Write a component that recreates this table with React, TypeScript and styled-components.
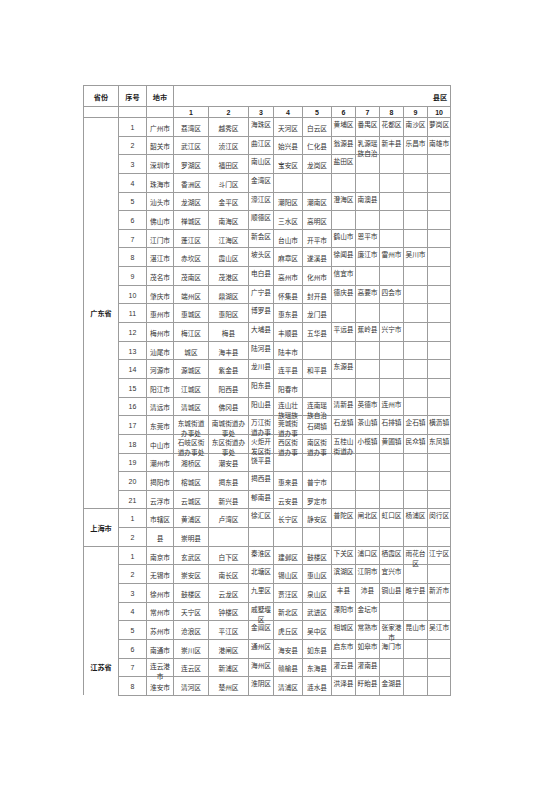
import React from 'react';
import styled, { createGlobalStyle } from 'styled-components';

const Global = createGlobalStyle`
  html, body { margin: 0; padding: 0; background: #ffffff; }
  body {
    font-family: "Noto Sans CJK SC", "Liberation Sans", sans-serif;
    color: #333333;
  }
`;

const ROW = 18.65;
const FONT = 6.7;
const COLS = [35, 28, 27, 35, 40, 25, 29, 29, 24, 24, 24, 24, 23];
// columns (0-based within the 10 county columns) whose text hangs from the top
const TOP_COLS = new Set([2, 5, 6, 7, 8, 9]);

type Row = { seq: string; city: string; items: string[] };
type Province = { name: string; rows: Row[]; tail?: boolean };

const DATA: Province[] = [
  {
    name: '广东省',
    rows: [
      { seq: '1', city: '广州市', items: ['荔湾区', '越秀区', '海珠区', '天河区', '白云区', '黄埔区', '番禺区', '花都区', '南沙区', '萝岗区'] },
      { seq: '2', city: '韶关市', items: ['武江区', '浈江区', '曲江区', '始兴县', '仁化县', '翁源县', '乳源瑶族自治', '新丰县', '乐昌市', '南雄市'] },
      { seq: '3', city: '深圳市', items: ['罗湖区', '福田区', '南山区', '宝安区', '龙岗区', '盐田区'] },
      { seq: '4', city: '珠海市', items: ['香洲区', '斗门区', '金湾区'] },
      { seq: '5', city: '汕头市', items: ['龙湖区', '金平区', '濠江区', '潮阳区', '潮南区', '澄海区', '南澳县'] },
      { seq: '6', city: '佛山市', items: ['禅城区', '南海区', '顺德区', '三水区', '高明区'] },
      { seq: '7', city: '江门市', items: ['蓬江区', '江海区', '新会区', '台山市', '开平市', '鹤山市', '恩平市'] },
      { seq: '8', city: '湛江市', items: ['赤坎区', '霞山区', '坡头区', '麻章区', '遂溪县', '徐闻县', '廉江市', '雷州市', '吴川市'] },
      { seq: '9', city: '茂名市', items: ['茂南区', '茂港区', '电白县', '高州市', '化州市', '信宜市'] },
      { seq: '10', city: '肇庆市', items: ['端州区', '鼎湖区', '广宁县', '怀集县', '封开县', '德庆县', '高要市', '四会市'] },
      { seq: '11', city: '惠州市', items: ['惠城区', '惠阳区', '博罗县', '惠东县', '龙门县'] },
      { seq: '12', city: '梅州市', items: ['梅江区', '梅县', '大埔县', '丰顺县', '五华县', '平远县', '蕉岭县', '兴宁市'] },
      { seq: '13', city: '汕尾市', items: ['城区', '海丰县', '陆河县', '陆丰市'] },
      { seq: '14', city: '河源市', items: ['源城区', '紫金县', '龙川县', '连平县', '和平县', '东源县'] },
      { seq: '15', city: '阳江市', items: ['江城区', '阳西县', '阳东县', '阳春市'] },
      { seq: '16', city: '清远市', items: ['清城区', '佛冈县', '阳山县', '连山壮族瑶族', '连南瑶族自治', '清新县', '英德市', '连州市'] },
      { seq: '17', city: '东莞市', items: ['东城街道办事处', '南城街道办事处', '万江街道办事', '莞城街道办事', '石碣镇', '石龙镇', '茶山镇', '石排镇', '企石镇', '横沥镇'] },
      { seq: '18', city: '中山市', items: ['石岐区街道办事处', '东区街道办事处', '火炬开发区街', '西区街道办事', '南区街道办事', '五桂山街道办', '小榄镇', '黄圃镇', '民众镇', '东凤镇'] },
      { seq: '19', city: '潮州市', items: ['湘桥区', '潮安县', '饶平县'] },
      { seq: '20', city: '揭阳市', items: ['榕城区', '揭东县', '揭西县', '惠来县', '普宁市'] },
      { seq: '21', city: '云浮市', items: ['云城区', '新兴县', '郁南县', '云安县', '罗定市'] },
    ],
  },
  {
    name: '上海市',
    rows: [
      { seq: '1', city: '市辖区', items: ['黄浦区', '卢湾区', '徐汇区', '长宁区', '静安区', '普陀区', '闸北区', '虹口区', '杨浦区', '闵行区'] },
      { seq: '2', city: '县', items: ['崇明县'] },
    ],
  },
  {
    name: '江苏省',
    tail: true,
    rows: [
      { seq: '1', city: '南京市', items: ['玄武区', '白下区', '秦淮区', '建邺区', '鼓楼区', '下关区', '浦口区', '栖霞区', '雨花台区', '江宁区'] },
      { seq: '2', city: '无锡市', items: ['崇安区', '南长区', '北塘区', '锡山区', '惠山区', '滨湖区', '江阴市', '宜兴市'] },
      { seq: '3', city: '徐州市', items: ['鼓楼区', '云龙区', '九里区', '贾汪区', '泉山区', '丰县', '沛县', '铜山县', '睢宁县', '新沂市'] },
      { seq: '4', city: '常州市', items: ['天宁区', '钟楼区', '戚墅堰区', '新北区', '武进区', '溧阳市', '金坛市'] },
      { seq: '5', city: '苏州市', items: ['沧浪区', '平江区', '金阊区', '虎丘区', '吴中区', '相城区', '常熟市', '张家港市', '昆山市', '吴江市'] },
      { seq: '6', city: '南通市', items: ['崇川区', '港闸区', '通州区', '海安县', '如东县', '启东市', '如皋市', '海门市'] },
      { seq: '7', city: '连云港市', items: ['连云区', '新浦区', '海州区', '赣榆县', '东海县', '灌云县', '灌南县'] },
      { seq: '8', city: '淮安市', items: ['清河区', '楚州区', '淮阴区', '清浦区', '涟水县', '洪泽县', '盱眙县', '金湖县'] },
    ],
  },
];

const Page = styled.div`
  width: 560px;
  height: 792px;
  box-sizing: border-box;
  padding: 85px 0 0 83px;
  overflow: hidden;
`;

const Table = styled.table`
  border-collapse: collapse;
  table-layout: fixed;
  width: 367px;
`;

const Cell = styled.td<{ $noBottom?: boolean }>`
  border: 1px solid #9c9c9c;
  ${(p) => (p.$noBottom ? 'border-bottom: none;' : '')}
  padding: 0;
  vertical-align: top;
`;

const HeadBox = styled.div<{ $align?: 'center' | 'right' }>`
  height: 20px;
  box-sizing: border-box;
  display: flex;
  align-items: center;
  justify-content: ${(p) => (p.$align === 'right' ? 'flex-end' : 'center')};
  padding: 1px 3px 0;
  font-size: 7.2px;
  font-weight: 700;
  color: #1a1a1a;
`;

const NumBox = styled.div`
  height: 10px;
  box-sizing: border-box;
  display: flex;
  align-items: center;
  justify-content: center;
  font-family: "Liberation Sans", "Noto Sans CJK SC", sans-serif;
  font-size: 7px;
  font-weight: 700;
  color: #1a1a1a;
`;

const DataBox = styled.div<{ $top?: boolean; $multi?: boolean; $pad: number }>`
  height: ${ROW - 1}px;
  box-sizing: border-box;
  display: flex;
  flex-direction: column;
  justify-content: ${(p) => (p.$top || p.$multi ? 'flex-start' : 'center')};
  padding: ${(p) => (p.$top ? '1px' : '2px')} ${(p) => p.$pad}px 0;
  text-align: center;
  font-size: ${FONT}px;
  line-height: 10px;
  overflow: visible;
  white-space: normal;
  word-break: break-all;
`;

const SeqBox = styled(DataBox)`
  font-family: "Liberation Sans", "Noto Sans CJK SC", sans-serif;
  font-size: 7px;
`;

const ProvCell = styled.td<{ $tail?: boolean }>`
  border: 1px solid #9c9c9c;
  ${(p) => (p.$tail ? 'border-bottom: none;' : '')}
  padding: 0 0 ${(p) => (p.$tail ? '23px' : '0')};
  vertical-align: ${(p) => (p.$tail ? 'bottom' : 'middle')};
  text-align: center;
  font-size: 7.2px;
  line-height: 10px;
  font-weight: 700;
  color: #1a1a1a;
`;

function isMulti(text: string, colIndex: number, pad: number) {
  const inner = COLS[colIndex] - 1 - pad * 2;
  const cap = Math.max(1, Math.floor(inner / FONT + 0.001));
  return text.length > cap;
}

function DataCell({ text, col, top }: { text: string; col: number; top: boolean }) {
  const pad = top ? 0 : 1.5;
  return (
    <Cell>
      <DataBox $top={top} $pad={pad} $multi={text.length > 0 && isMulti(text, col, pad)}>
        {text}
      </DataBox>
    </Cell>
  );
}

export default function App() {
  return (
    <>
      <Global />
      <Page>
        <Table>
          <colgroup>
            {COLS.map((w, i) => (
              <col key={i} style={{ width: `${w}px` }} />
            ))}
          </colgroup>
          <tbody>
            <tr>
              <Cell><HeadBox>省份</HeadBox></Cell>
              <Cell><HeadBox>序号</HeadBox></Cell>
              <Cell><HeadBox>地市</HeadBox></Cell>
              <Cell colSpan={10}><HeadBox $align="right">县区</HeadBox></Cell>
            </tr>
            <tr>
              <Cell><NumBox /></Cell>
              <Cell><NumBox /></Cell>
              <Cell><NumBox /></Cell>
              {Array.from({ length: 10 }, (_, i) => (
                <Cell key={i}><NumBox>{i + 1}</NumBox></Cell>
              ))}
            </tr>
            {DATA.map((prov) =>
              prov.rows.map((row, ri) => (
                <tr key={`${prov.name}-${row.seq}`}>
                  {ri === 0 && (
                    <ProvCell rowSpan={prov.rows.length} $tail={prov.tail}>
                      {prov.name}
                    </ProvCell>
                  )}
                  <Cell $noBottom={false}>
                    <SeqBox $pad={1.5}>{row.seq}</SeqBox>
                  </Cell>
                  <DataCell text={row.city} col={2} top={false} />
                  {Array.from({ length: 10 }, (_, i) => (
                    <DataCell key={i} text={row.items[i] ?? ''} col={3 + i} top={TOP_COLS.has(i)} />
                  ))}
                </tr>
              ))
            )}
          </tbody>
        </Table>
      </Page>
    </>
  );
}
